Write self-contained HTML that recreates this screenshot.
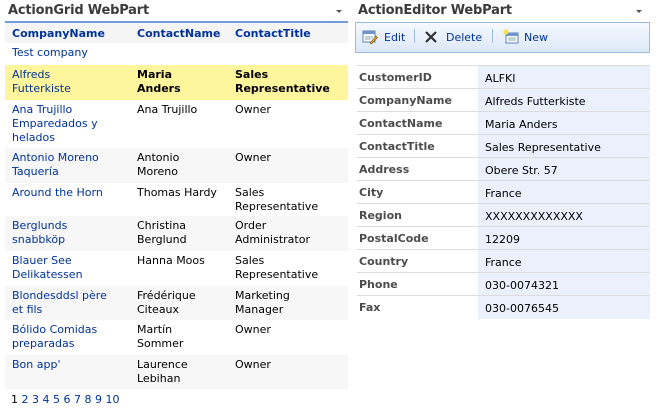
<!DOCTYPE html>
<html><head><meta charset="utf-8"><style>
*{margin:0;padding:0;box-sizing:border-box}
body{width:658px;height:413px;background:#fff;font-family:"DejaVu Sans",Verdana,sans-serif;font-size:11px;color:#000;position:relative;overflow:hidden}
.a{position:absolute}
.title{font-size:13px;font-weight:bold;color:#3b3b3b;white-space:nowrap;letter-spacing:-0.2px}
.arrow{width:0;height:0;border-left:3px solid transparent;border-right:3px solid transparent;border-top:3px solid #555}
.row{position:absolute;left:5px;width:343px}
.row div{position:absolute;top:3px;line-height:14px;white-space:nowrap}
.c1{left:7px;color:#003399}.c2{left:132px}.c3{left:230px}
.g{background:#f7f7f7}
.lab{position:absolute;left:357px;width:121px;height:23px;border-bottom:1px solid #dcdcdc;font-weight:bold;color:#4c4c4c;padding:5px 0 0 2px}
.val{position:absolute;left:478px;width:172px;height:23px;background:#eaf1fd;border-bottom:1px solid #dcdcdc;padding:6px 0 0 7px}
</style></head><body>
<div class="a title" style="left:8px;top:3px">ActionGrid WebPart</div>
<div class="a arrow" style="left:336px;top:10px"></div>
<div class="a" style="left:5px;top:21px;width:343px;height:2px;background:#6f9dd9"></div>
<div class="row" style="top:23px;height:20px;background:#f5f5f5;font-weight:bold;color:#003399"><div class="c1" style="top:4px">CompanyName</div><div class="c2" style="top:4px;color:#003399">ContactName</div><div class="c3" style="top:4px">ContactTitle</div></div>
<div class="row" style="top:43px;height:22px"><div class="c1">Test company</div></div>
<div class="row" style="top:65px;height:35px;background:#fff59c"><div class="c1">Alfreds<br>Futterkiste</div><div class="c2" style="font-weight:bold">Maria<br>Anders</div><div class="c3" style="font-weight:bold">Sales<br>Representative</div></div>
<div class="row" style="top:100px;height:48px"><div class="c1">Ana Trujillo<br>Emparedados y<br>helados</div><div class="c2">Ana Trujillo</div><div class="c3">Owner</div></div>
<div class="row g" style="top:148px;height:35px"><div class="c1">Antonio Moreno<br>Taquería</div><div class="c2">Antonio<br>Moreno</div><div class="c3">Owner</div></div>
<div class="row" style="top:183px;height:33px"><div class="c1">Around the Horn</div><div class="c2">Thomas Hardy</div><div class="c3">Sales<br>Representative</div></div>
<div class="row g" style="top:216px;height:35px"><div class="c1">Berglunds<br>snabbköp</div><div class="c2">Christina<br>Berglund</div><div class="c3">Order<br>Administrator</div></div>
<div class="row" style="top:251px;height:35px"><div class="c1">Blauer See<br>Delikatessen</div><div class="c2">Hanna Moos</div><div class="c3">Sales<br>Representative</div></div>
<div class="row g" style="top:286px;height:34px"><div class="c1">Blondesddsl père<br>et fils</div><div class="c2">Frédérique<br>Citeaux</div><div class="c3">Marketing<br>Manager</div></div>
<div class="row" style="top:320px;height:35px"><div class="c1">Bólido Comidas<br>preparadas</div><div class="c2">Martín<br>Sommer</div><div class="c3">Owner</div></div>
<div class="row g" style="top:355px;height:34px"><div class="c1">Bon app'</div><div class="c2">Laurence<br>Lebihan</div><div class="c3">Owner</div></div>
<div class="a" style="left:11px;top:393px;white-space:nowrap">1 <span style="color:#003399">2 3 4 5 6 7 8 9 10</span></div>

<div class="a title" style="left:358px;top:3px">ActionEditor WebPart</div>
<div class="a arrow" style="left:636px;top:10px"></div>
<div class="a" style="left:355px;top:22px;width:295px;height:31px;border:1px solid #9bbbe3;background:linear-gradient(#f6f9fe,#dce8f8)"></div>
<svg class="a" style="left:362px;top:29px" width="16" height="16" viewBox="0 0 16 16"><rect x="1" y="2" width="12" height="11" fill="#fff" stroke="#5a7fb5"/><rect x="1" y="2" width="12" height="3" fill="#6d95cc"/><line x1="3" y1="8" x2="11" y2="8" stroke="#8aa"/><line x1="3" y1="10" x2="9" y2="10" stroke="#8aa"/><path d="M8 14 L14 7 L15.5 8.5 L9.5 15 Z" fill="#e8a23a" stroke="#8a5a10" stroke-width=".6"/></svg>
<div class="a" style="left:384px;top:31px;color:#003399">Edit</div>
<div class="a" style="left:414px;top:29px;width:1px;height:14px;background:#9bbbe3"></div>
<svg class="a" style="left:424px;top:30px" width="14" height="14" viewBox="0 0 14 14"><path d="M2 2 L12 12 M12 2 L2 12" stroke="#333" stroke-width="2.2"/></svg>
<div class="a" style="left:446px;top:31px;color:#003399">Delete</div>
<div class="a" style="left:492px;top:29px;width:1px;height:14px;background:#9bbbe3"></div>
<svg class="a" style="left:502px;top:28px" width="17" height="16" viewBox="0 0 17 16"><rect x="4" y="5" width="12" height="10" fill="#fff" stroke="#5a7fb5"/><rect x="4" y="5" width="12" height="3" fill="#6d95cc"/><line x1="6" y1="10" x2="14" y2="10" stroke="#8aa"/><line x1="6" y1="12" x2="14" y2="12" stroke="#8aa"/><circle cx="4" cy="4" r="2.5" fill="#f7e04a"/></svg>
<div class="a" style="left:524px;top:31px;color:#003399">New</div>

<div class="a" style="left:357px;top:65px;width:293px;height:1px;background:#dcdcdc"></div>
<div class="lab" style="top:66px">CustomerID</div><div class="val" style="top:66px">ALFKI</div>
<div class="lab" style="top:89px">CompanyName</div><div class="val" style="top:89px">Alfreds Futterkiste</div>
<div class="lab" style="top:112px">ContactName</div><div class="val" style="top:112px">Maria Anders</div>
<div class="lab" style="top:135px">ContactTitle</div><div class="val" style="top:135px">Sales Representative</div>
<div class="lab" style="top:158px">Address</div><div class="val" style="top:158px">Obere Str. 57</div>
<div class="lab" style="top:181px">City</div><div class="val" style="top:181px">France</div>
<div class="lab" style="top:204px">Region</div><div class="val" style="top:204px">XXXXXXXXXXXXX</div>
<div class="lab" style="top:227px">PostalCode</div><div class="val" style="top:227px">12209</div>
<div class="lab" style="top:250px">Country</div><div class="val" style="top:250px">France</div>
<div class="lab" style="top:273px">Phone</div><div class="val" style="top:273px">030-0074321</div>
<div class="lab" style="top:296px;border-bottom:none">Fax</div><div class="val" style="top:296px;border-bottom:none">030-0076545</div>
</body></html>
